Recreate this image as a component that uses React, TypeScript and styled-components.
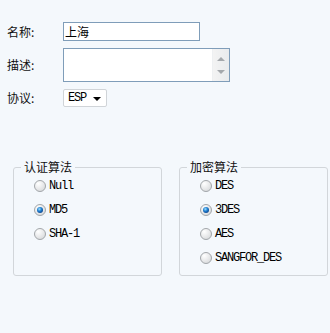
import React from 'react';
import styled, { createGlobalStyle } from 'styled-components';

const Global = createGlobalStyle`
  html, body { margin: 0; padding: 0; background: #f4f8fc; }
  body { font-family: "Noto Sans CJK SC", sans-serif; font-size: 12px; color: #000; }
`;

const Page = styled.div`
  width: 330px;
  height: 333px;
  box-sizing: border-box;
  padding-top: 22px;
`;

const Form = styled.div`
  display: grid;
  grid-template-columns: 56px auto;
  row-gap: 7px;
  align-items: center;
  justify-items: start;
  padding-left: 7px;
`;

const Label = styled.span`
  font-size: 12px;
  line-height: 14px;
  color: #111;
`;

const TextInput = styled.input`
  box-sizing: border-box;
  width: 137px;
  height: 19px;
  margin: 0;
  padding: 0 1px;
  border: 1px solid #7f9db9;
  background: #fff;
  font-family: "Noto Sans CJK SC", sans-serif;
  font-size: 12px;
  color: #000;
  outline: none;
`;

const AreaBox = styled.div`
  box-sizing: border-box;
  width: 167px;
  height: 34px;
  border: 1px solid #7f9db9;
  background: #fff;
  display: flex;
`;

const Area = styled.textarea`
  flex: 1;
  border: none;
  margin: 0;
  padding: 1px;
  resize: none;
  outline: none;
  background: transparent;
  font-family: "Noto Sans CJK SC", sans-serif;
  font-size: 12px;
`;

const ScrollBar = styled.div`
  width: 16px;
  background: linear-gradient(to right, #f3f3f3, #e9ebed);
  border-left: 1px solid #eef0f2;
  display: flex;
  flex-direction: column;
  align-items: center;
  justify-content: space-between;
  padding: 8px 0 7px;
`;

const Arrow = styled.div<{ $up?: boolean }>`
  width: 0;
  height: 0;
  border-left: 4px solid transparent;
  border-right: 4px solid transparent;
  ${p => (p.$up ? 'border-bottom: 4px solid #a4a8ac;' : 'border-top: 4px solid #a4a8ac;')}
`;

const Select = styled.div`
  box-sizing: border-box;
  width: 44px;
  height: 18px;
  border: 1px solid #d0d4d8;
  border-radius: 2px;
  background: #fff;
  display: flex;
  align-items: center;
  justify-content: space-between;
  padding: 0 5px 0 4px;
`;

const Mono = styled.span`
  font-family: "Liberation Mono", "DejaVu Sans Mono", monospace;
  font-size: 12px;
  letter-spacing: -1.2px;
  line-height: 14px;
  color: #000;
`;

const DropArrow = styled.div`
  width: 0;
  height: 0;
  border-left: 4px solid transparent;
  border-right: 4px solid transparent;
  border-top: 4px solid #000;
  margin-top: 2px;
`;

const Groups = styled.div`
  display: flex;
  gap: 17px;
  padding-left: 13px;
  margin-top: 53px;
`;

const Group = styled.fieldset`
  box-sizing: border-box;
  width: 149px;
  height: 116px;
  margin: 0;
  padding: 4px 0 0 7px;
  border: 1px solid #d2d6da;
  border-radius: 3px;
`;

const Legend = styled.legend`
  padding: 0 3px;
  font-size: 12px;
  line-height: 14px;
  color: #111;
`;

const Options = styled.div`
  display: flex;
  flex-direction: column;
  gap: 8px;
  padding-left: 13px;
`;

const Option = styled.label`
  display: flex;
  align-items: center;
  gap: 3px;
  height: 16px;
`;

const Radio = ({ checked }: { checked?: boolean }) => (
  <svg width="12" height="12" viewBox="0 0 12 12">
    <defs>
      <radialGradient id="rf" cx="0.35" cy="0.3" r="0.8">
        <stop offset="0" stopColor="#ffffff" />
        <stop offset="1" stopColor="#d6d8da" />
      </radialGradient>
      <radialGradient id="rb" cx="0.4" cy="0.35" r="0.7">
        <stop offset="0" stopColor="#9fe0ff" />
        <stop offset="0.5" stopColor="#1f7fd0" />
        <stop offset="1" stopColor="#0a3f8a" />
      </radialGradient>
    </defs>
    <circle cx="6" cy="6" r="5.5" fill="url(#rf)" stroke="#a2a6aa" strokeWidth="1" />
    {checked && <circle cx="6" cy="6" r="3" fill="url(#rb)" />}
  </svg>
);

const auth = ['Null', 'MD5', 'SHA-1'];
const enc = ['DES', '3DES', 'AES', 'SANGFOR_DES'];

export default function App() {
  return (
    <>
      <Global />
      <Page>
        <Form>
          <Label>名称:</Label>
          <TextInput defaultValue="上海" />
          <Label>描述:</Label>
          <AreaBox>
            <Area />
            <ScrollBar>
              <Arrow $up />
              <Arrow />
            </ScrollBar>
          </AreaBox>
          <Label>协议:</Label>
          <Select>
            <Mono>ESP</Mono>
            <DropArrow />
          </Select>
        </Form>
        <Groups>
          <Group>
            <Legend>认证算法</Legend>
            <Options>
              {auth.map(a => (
                <Option key={a}>
                  <Radio checked={a === 'MD5'} />
                  <Mono>{a}</Mono>
                </Option>
              ))}
            </Options>
          </Group>
          <Group>
            <Legend>加密算法</Legend>
            <Options>
              {enc.map(a => (
                <Option key={a}>
                  <Radio checked={a === '3DES'} />
                  <Mono>{a}</Mono>
                </Option>
              ))}
            </Options>
          </Group>
        </Groups>
      </Page>
    </>
  );
}
